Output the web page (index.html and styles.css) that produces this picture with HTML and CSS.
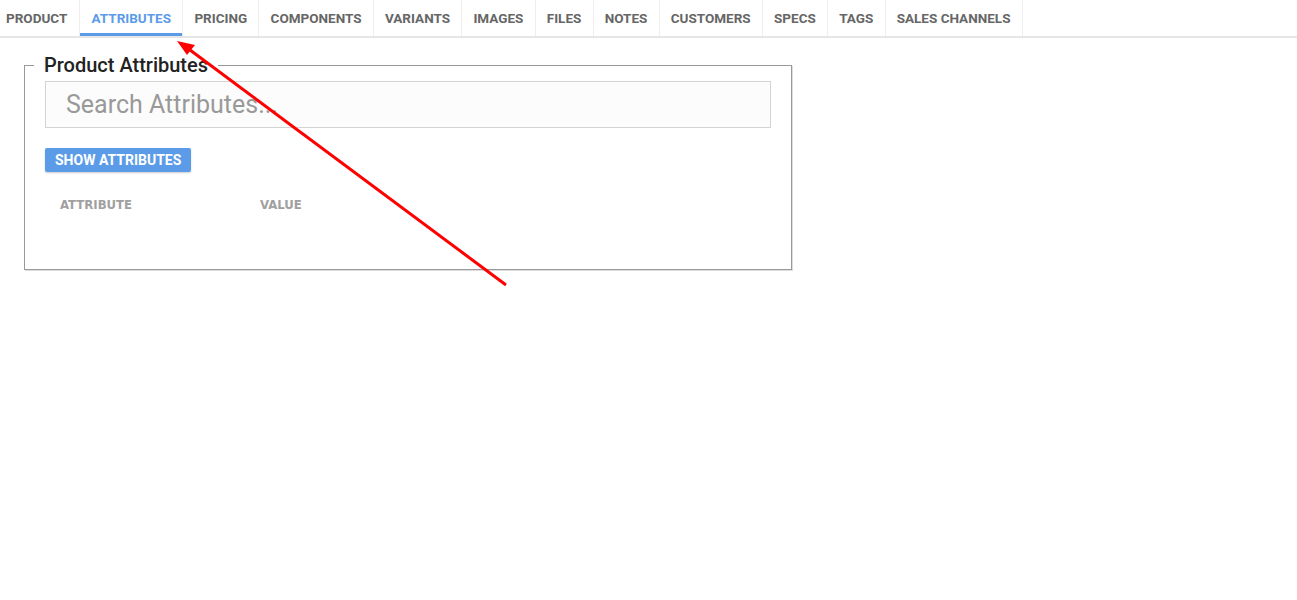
FILE: index.html
```html
<!DOCTYPE html>
<html lang="en">
<head>
    <meta charset="UTF-8">
    <meta name="viewport" content="width=device-width, initial-scale=1.0">
    <title>Product Attributes</title>
    <link rel="stylesheet" href="styles.css">
</head>
<body>
    <div class="tabs">
        <a class="tab first">Product</a>
        <a class="tab active">Attributes</a>
        <a class="tab">Pricing</a>
        <a class="tab">Components</a>
        <a class="tab">Variants</a>
        <a class="tab">Images</a>
        <a class="tab">Files</a>
        <a class="tab">Notes</a>
        <a class="tab">Customers</a>
        <a class="tab">Specs</a>
        <a class="tab">Tags</a>
        <a class="tab">Sales Channels</a>
    </div>

    <div class="content">
        <fieldset class="attributes-box">
            <legend>Product Attributes</legend>
            <input type="text" class="search-input" placeholder="Search Attributes..." />
            <button class="show-button">Show Attributes</button>
            <div class="table-head">
                <span class="col-attr">Attribute</span>
                <span class="col-value">Value</span>
            </div>
        </fieldset>
    </div>

    <!-- annotation arrow pointing at the active tab -->
    <svg class="annotation" width="1297" height="600" viewBox="0 0 1297 600">
        <line x1="506" y1="285" x2="186" y2="47" stroke="#f00" stroke-width="3" />
        <polygon points="177,41 195,45 187,55" fill="#f00" />
    </svg>
</body>
</html>
```

FILE: styles.css
```css
body {
    font-family: Roboto, Arial, sans-serif;
    margin: 0;
    background-color: white;
    color: #333;
}

.tabs {
    display: flex;
    height: 36px;
    border-bottom: 2px solid #e6e6e6;
}

.tab {
    display: flex;
    align-items: center;
    padding: 0 11.2px 1px;
    font-size: 13.5px;
    font-weight: bold;
    text-transform: uppercase;
    color: #666;
    border-right: 1px solid #eee;
    cursor: pointer;
}

.tab.first {
    padding-left: 6px;
    padding-right: 12px;
}

.tab.active {
    color: #5b9be8;
    box-shadow: inset 0 -3px 0 #5b9be8;
}

.content {
    padding: 15px 24px;
}

.attributes-box {
    width: 724px;
    margin: 0;
    padding: 4px 20px 57px;
    border: 1px solid #999;
    box-shadow: 1px 1px 0 #ddd;
}

.attributes-box legend {
    padding: 0 10px;
    margin-left: -11px;
    font-size: 20px;
    font-weight: 500;
    color: #222;
    line-height: 24px;
}

.search-input {
    display: block;
    box-sizing: border-box;
    width: 726px;
    height: 47px;
    padding: 0 20px;
    border: 1px solid #d4d4d4;
    background-color: #fcfcfc;
    font-family: Roboto, Arial, sans-serif;
    font-size: 25px;
    color: #333;
}

.search-input::placeholder {
    color: #999;
}

.show-button {
    display: block;
    margin-top: 20px;
    height: 24px;
    padding: 0 10px;
    border: none;
    border-radius: 2px;
    background-color: #5b9be8;
    color: white;
    font-family: Roboto, Arial, sans-serif;
    font-size: 14px;
    font-weight: bold;
    text-transform: uppercase;
    box-shadow: 0 1px 2px rgba(0, 0, 0, 0.2);
    cursor: pointer;
}

.table-head {
    display: flex;
    padding: 25px 15px 0;
    font-family: "DejaVu Sans Condensed", sans-serif;
    font-size: 13px;
    font-weight: bold;
    color: #a0a0a0;
    text-transform: uppercase;
}

.col-attr {
    width: 200px;
}

.annotation {
    position: absolute;
    top: 0;
    left: 0;
    pointer-events: none;
}
```
